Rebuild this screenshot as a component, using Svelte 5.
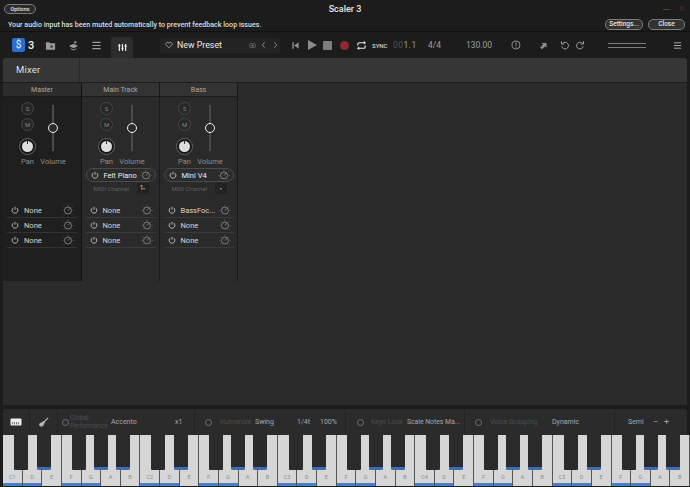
<script>
	const strips = [
		{ name: 'Master', master: true, inst: null, midi: '', fx: ['None', 'None', 'None'] },
		{ name: 'Main Track', inst: 'Felt Piano', midi: '1', fx: ['None', 'None', 'None'] },
		{ name: 'Bass', inst: 'Mini V4', midi: '', fx: ['BassFoc...', 'None', 'None'] }
	];

	const octaves = ['C1', 'C2', 'C3', 'C4', 'C5'];
	const whites = [
		{ n: 'D', on: true },
		{ n: 'E', on: false },
		{ n: 'F', on: true },
		{ n: 'G', on: true },
		{ n: 'A', on: false },
		{ n: 'B', on: false }
	];
	// black keys of one octave, k1..k5 hold their place
	const blacks = [
		{ cls: 'k1', on: false },
		{ cls: 'k2', on: true },
		{ cls: 'k3', on: false },
		{ cls: 'k4', on: true },
		{ cls: 'k5', on: true }
	];
</script>

{#snippet power()}
	<svg class="pw" viewBox="0 0 10 10" aria-hidden="true">
		<path d="M3 2.400 A3.600 3.600 0 1 0 7 2.400" fill="none" stroke="#d0d0d0" stroke-width="1" />
		<path d="M5 1 V4.600" stroke="#d0d0d0" stroke-width="1" />
	</svg>
{/snippet}

{#snippet dial()}
	<svg class="dial" viewBox="0 0 12 12" aria-hidden="true">
		<circle cx="6" cy="6.500" r="3.500" fill="none" stroke="#8f8f8f" stroke-width="0.8" />
		<path d="M6 6.500 L7.800 4.300" stroke="#8f8f8f" stroke-width="0.8" />
		<path d="M6 .6V1.800M1.600 2.400l.8.8M10.400 2.400l-.8.8M.3 6.500h1.100M10.700 6.500h1.100M1.800 10.600l.7-.7M10.200 10.600l-.7-.7" stroke="#6f6f6f" stroke-width="0.7" />
	</svg>
{/snippet}

<div class="app">
	<header class="titlebar">
		<button class="mac opt">Options</button>
		<span class="title">Scaler 3</span>
		<span class="winctl"><i class="min"></i><i class="x">×</i></span>
	</header>
	<div class="notice">
		<span>Your audio input has been muted automatically to prevent feedback loop issues.</span>
		<span class="notice-btns">
			<button class="mac settings">Settings...</button>
			<button class="mac close">Close</button>
		</span>
	</div>

	<nav class="toolbar">
		<span class="logo">$</span>
		<span class="logo3">3</span>
		<svg class="ic folder" viewBox="0 0 12 12"><path d="M1 2.500h3.500l1 1H11v7H1z" fill="#9a9a9a" /><rect x="6" y="6" width="2.400" height="2.400" fill="#333" /></svg>
		<svg class="ic layers" viewBox="0 0 12 12"><path d="M1 6.500 6 4l5 2.500L6 9z" fill="#9a9a9a" /><path d="M3 9.500 6 11l3-1.500" stroke="#9a9a9a" fill="none" /><path d="M8 1v3M6.500 2.500h3" stroke="#9a9a9a" /></svg>
		<svg class="ic list" viewBox="0 0 12 12"><path d="M1.500 2.500h9M1.500 6h9M1.500 9.500h9" stroke="#9a9a9a" stroke-width="1.300" /></svg>
		<span class="mixtab">
			<svg viewBox="0 0 10 10" width="9" height="9"><path d="M1.500 1v8M5 1v8M8.500 1v8" stroke="#eee" stroke-width="1.300" /><path d="M.3 3h2.400M3.800 6h2.400M7.300 3.500h2.400" stroke="#eee" stroke-width="1.300" /></svg>
		</span>
		<div class="preset">
			<svg class="heart" viewBox="0 0 10 10"><path d="M5 8.500 1.300 4.800a2 2 0 0 1 3.700-2 2 2 0 0 1 3.700 2z" fill="none" stroke="#bdbdbd" stroke-width=".9" /></svg>
			<span class="pname">New Preset</span>
			<svg class="pic" viewBox="0 0 10 10"><rect x="1" y="2.500" width="8" height="5.500" rx="1" fill="none" stroke="#777" /><rect x="3.500" y="4" width="3" height="2.500" fill="#777" /></svg>
			<svg class="chev" viewBox="0 0 6 10"><path d="M4.500 1.500 1.500 5l3 3.500" fill="none" stroke="#999" /></svg>
			<svg class="chev c2" viewBox="0 0 6 10"><path d="M1.500 1.500 4.500 5l-3 3.500" fill="none" stroke="#999" /></svg>
		</div>
		<svg class="tr prev" viewBox="0 0 10 10"><path d="M1.500 1.500h1.600v7H1.500zM8.500 1.500v7L3.500 5z" fill="#8f8f8f" /></svg>
		<svg class="tr play" viewBox="0 0 10 10"><path d="M1 0v10l9-5z" fill="#8a8a8a" /></svg>
		<span class="stop"></span>
		<span class="rec"></span>
		<svg class="tr loop" viewBox="0 0 12 12"><path d="M2 6V4.500a1.500 1.500 0 0 1 1.500-1.500H9M10 6v1.500A1.500 1.500 0 0 1 8.500 9H3" fill="none" stroke="#e6e6e6" stroke-width="1.300" /><path d="M8.500 1 11 3 8.500 5zM3.500 7 1 9l2.500 2z" fill="#e6e6e6" /></svg>
		<span class="sync">SYNC</span>
		<span class="pos"><b>00</b>1.1</span>
		<span class="sig">4/4</span>
		<span class="bpm">130.00</span>
		<svg class="tr info" viewBox="0 0 12 12"><circle cx="6" cy="6" r="4.800" fill="none" stroke="#a8a8a8" /><path d="M6 3v3.800M6 8v1.100" stroke="#a8a8a8" /></svg>
		<svg class="tr exp" viewBox="0 0 12 12"><path d="M3.500 2.500H10V9L8 7 4 11 1.500 8.500 5.500 4.500z" fill="#8f8f8f" /></svg>
		<svg class="tr undo" viewBox="0 0 12 12"><path d="M3 4.200A4 4 0 1 1 2.200 7.500" fill="none" stroke="#a8a8a8" stroke-width="1.100" /><path d="M1.800 1.500v3.300h3.300" fill="none" stroke="#a8a8a8" stroke-width="1.100" /></svg>
		<svg class="tr redo" viewBox="0 0 12 12"><path d="M9 4.200A4 4 0 1 0 9.800 7.500" fill="none" stroke="#a8a8a8" stroke-width="1.100" /><path d="M10.200 1.500v3.300H6.900" fill="none" stroke="#a8a8a8" stroke-width="1.100" /></svg>
		<span class="meter"><i></i><i></i></span>
		<svg class="tr burger" viewBox="0 0 10 10"><path d="M1 2h8M1 5h8M1 8h8" stroke="#a8a8a8" stroke-width="1.100" /></svg>
	</nav>

	<main class="panel">
		<div class="tabbar"><div class="tabname">Mixer</div></div>
		<div class="strips">
			{#each strips as s}
				<section class="strip" class:master={s.master}>
					<div class="sname">{s.name}</div>
					<div class="controls">
						<div class="col-left">
							<span class="round">S</span>
							<span class="round">M</span>
							<span class="knob"><i></i></span>
							<span class="lab">Pan</span>
						</div>
						<div class="col-right">
							<div class="fader"><span class="thumb"></span></div>
							<span class="lab">Volume</span>
						</div>
					</div>
					<div class="inst-area">
						{#if s.inst}
							<div class="inst">
								{@render power()}
								<span class="iname">{s.inst}</span>
								{@render dial()}
							</div>
							<div class="midi">
								<span>MIDI Channel</span>
								<span class="mbox">{s.midi}<em>▾</em></span>
							</div>
						{/if}
					</div>
					<div class="fxlist">
						{#each s.fx as f}
							<div class="fx">
								{@render power()}
								<span class="fname">{f}</span>
								{@render dial()}
							</div>
						{/each}
					</div>
				</section>
			{/each}
		</div>
	</main>

	<div class="bottom">
		<div class="sec s-keys">
			<svg viewBox="0 0 12 8" width="12" height="8"><rect x=".5" y=".5" width="11" height="7" rx="1" fill="#eee" /><path d="M2.500 4v2.500M4.500 4v2.500M6.500 4v2.500M8.500 4v2.500" stroke="#555" stroke-width=".8" /></svg>
		</div>
		<div class="sec s-gtr">
			<svg viewBox="0 0 12 12" width="11" height="11"><path d="M11 1 6.500 5.500" stroke="#b5b5b5" stroke-width="1.300" /><path d="M6 4.500c1 0 1.800.8 1.500 1.800-.3.700-.9.800-1 1.400-.2 1.500-1.400 3-3 2.800C2 10.300 1 9 1.300 7.700c.3-1.200 1.600-1.400 2.500-1.700.8-.3 1.100-1.500 2.200-1.500z" fill="#b5b5b5" /></svg>
		</div>
		<div class="sec s-global">
			<span class="ring"></span>
			<span class="dim two">Global<br />Performance</span>
			<span class="val accento">Accento</span>
			<span class="val x1">x1</span>
		</div>
		<div class="sec s-human">
			<span class="ring"></span>
			<span class="dim hum">Humanize</span>
			<span class="val swing">Swing</span>
			<span class="val t14">1/4t</span>
			<span class="val pct">100%</span>
		</div>
		<div class="sec s-lock">
			<span class="ring"></span>
			<span class="dim lock">Keys Lock</span>
			<span class="val scale">Scale Notes Ma...</span>
		</div>
		<div class="sec s-voice">
			<span class="ring"></span>
			<span class="dim voice">Voice Grouping</span>
			<span class="val dyn">Dynamic</span>
		</div>
		<div class="sec s-semi">
			<span class="val">Semi</span>
			<span class="pm minus">−</span>
			<span class="pm">+</span>
		</div>
	</div>

	<div class="keyboard">
		{#each octaves as c}
			<div class="octave">
				<div class="white on"><span>{c}</span></div>
				{#each whites as w}
					<div class="white" class:on={w.on}><span>{w.n}</span></div>
				{/each}
				{#each blacks as b}
					<div class="black {b.cls}" class:on={b.on}></div>
				{/each}
			</div>
		{/each}
	</div>
</div>

<style>
	:global(body) {
		margin: 0;
		background: #1c1c1c;
	}

	.app {
		width: 690px;
		height: 487px;
		overflow: hidden;
		display: flex;
		flex-direction: column;
		background: #1c1c1c;
		font-family: Roboto, "Liberation Sans", sans-serif;
		color: #d8d8d8;
	}

	.titlebar {
		height: 18px;
		flex: none;
		position: relative;
		display: flex;
		align-items: center;
		padding-left: 4px;
		box-sizing: border-box;
	}

	.title {
		position: absolute;
		left: 0;
		right: 0;
		text-align: center;
		font-size: 9px;
		font-weight: 500;
		color: #e6e6e6;
	}

	.mac {
		font-family: inherit;
		font-size: 6.500px;
		color: #e4e4e4;
		background: #333;
		border: 1px solid #7c7c7c;
		border-radius: 5px;
		padding: 0;
		height: 11px;
		line-height: 9px;
		font-weight: 500;
	}

	.opt {
		width: 32px;
		height: 10px;
		font-size: 5.500px;
		background: #2b2b2b;
	}

	.winctl {
		position: absolute;
		right: 6px;
		top: 4px;
		display: flex;
		gap: 9px;
		align-items: center;
	}

	.min {
		width: 7px;
		height: 1px;
		background: #4f4a22;
	}

	.x {
		font-style: normal;
		font-size: 10px;
		line-height: 10px;
		color: #5c2622;
	}

	.notice {
		height: 14px;
		flex: none;
		display: flex;
		justify-content: space-between;
		align-items: center;
		padding: 0 5px 0 8px;
		font-size: 7.100px;
		font-weight: 500;
		color: #dcdcdc;
		border-bottom: 1px solid #111;
		box-sizing: border-box;
	}

	.notice-btns {
		display: flex;
		gap: 5px;
	}

	.settings {
		width: 38px;
	}

	.close {
		width: 37px;
	}

	.toolbar {
		height: 26px;
		flex: none;
		display: flex;
		align-items: center;
	}

	.logo {
		width: 13px;
		height: 14px;
		margin-left: 12px;
		background: #2a6fd0;
		border-radius: 2px;
		color: #e8f0ff;
		font-size: 10px;
		line-height: 14px;
		text-align: center;
	}

	.logo3 {
		margin-left: 3px;
		font-size: 11px;
		font-weight: 500;
		color: #f0f0f0;
		width: 10px;
	}

	.ic {
		width: 11px;
		height: 11px;
		flex: none;
	}

	.folder {
		margin-left: 7px;
	}

	.layers {
		margin-left: 12px;
	}

	.list {
		margin-left: 12px;
	}

	.mixtab {
		margin-left: 9px;
		width: 22px;
		height: 21px;
		align-self: flex-end;
		background: #2d2d2d;
		border-radius: 3px 3px 0 0;
		display: flex;
		align-items: center;
		justify-content: center;
	}

	.preset {
		margin-left: 27px;
		width: 120px;
		height: 15px;
		background: #232323;
		border-radius: 2px;
		display: flex;
		align-items: center;
		box-sizing: border-box;
		padding-left: 5px;
	}

	.heart {
		width: 8px;
		height: 8px;
	}

	.pname {
		margin-left: 4px;
		width: 72px;
		font-size: 8.800px;
		color: #e8e8e8;
	}

	.pic {
		width: 7px;
		height: 7px;
	}

	.chev {
		margin-left: 5px;
		width: 5px;
		height: 8px;
	}

	.chev.c2 {
		margin-left: 7px;
	}

	.tr {
		flex: none;
	}

	.prev {
		margin-left: 11px;
		width: 9px;
		height: 9px;
	}

	.play {
		margin-left: 7px;
		width: 10px;
		height: 10px;
	}

	.stop {
		margin-left: 6px;
		width: 9px;
		height: 9px;
		background: #7d7d7d;
		border-radius: 1px;
	}

	.rec {
		margin-left: 8px;
		width: 9px;
		height: 9px;
		border-radius: 50%;
		background: #8d2a32;
	}

	.loop {
		margin-left: 7px;
		width: 11px;
		height: 11px;
	}

	.sync {
		margin-left: 5px;
		width: 21px;
		font-size: 6px;
		font-weight: 500;
		color: #d5d5d5;
	}

	.pos {
		font-size: 8.500px;
		color: #9c9c9c;
		width: 35px;
		letter-spacing: 0.5px;
	}

	.pos b {
		font-weight: 400;
		color: #555;
	}

	.sig {
		font-size: 8.500px;
		color: #9c9c9c;
		width: 38px;
	}

	.bpm {
		font-size: 8.500px;
		color: #9c9c9c;
		width: 45px;
	}

	.info {
		width: 10px;
		height: 10px;
	}

	.exp {
		margin-left: 18px;
		width: 9px;
		height: 9px;
	}

	.undo {
		margin-left: 12px;
		width: 10px;
		height: 10px;
	}

	.redo {
		margin-left: 5px;
		width: 10px;
		height: 10px;
	}

	.meter {
		margin-left: 23px;
		width: 38px;
		height: 5px;
		display: flex;
		flex-direction: column;
		justify-content: space-between;
	}

	.meter i {
		height: 1px;
		background: #7c7c7c;
	}

	.burger {
		margin-left: 27px;
		width: 9px;
		height: 9px;
	}

	.panel {
		flex: 1;
		margin: 0 3px;
		background: #2b2b2b;
		border-radius: 3px 3px 0 0;
		display: flex;
		flex-direction: column;
		min-height: 0;
	}

	.tabbar {
		height: 25px;
		background: #363636;
		border-bottom: 1px solid #1d1d1d;
		border-radius: 3px 3px 0 0;
		box-sizing: border-box;
		flex: none;
	}

	.tabname {
		width: 77px;
		height: 24px;
		border-right: 1px solid #292929;
		font-size: 9.500px;
		line-height: 24px;
		padding-left: 13px;
		box-sizing: border-box;
		color: #dfdfdf;
		letter-spacing: 0.2px;
	}

	.strips {
		display: flex;
		height: 198px;
		align-items: stretch;
	}

	.strip {
		width: 78px;
		flex: none;
		background: #2a2a2a;
		border-right: 1px solid #191919;
		box-sizing: border-box;
		display: flex;
		flex-direction: column;
		align-items: center;
	}

	.strip.master {
		width: 79px;
		background: #1f1f1f;
		border-right: 1px solid #111;
	}

	.sname {
		width: 100%;
		height: 14px;
		background: #333;
		border-bottom: 1px solid #1a1a1a;
		box-sizing: border-box;
		font-size: 7px;
		line-height: 15px;
		text-align: center;
		color: #a9a9a9;
		flex: none;
	}

	.master .sname {
		background: #2c2c2c;
	}

	.controls {
		width: 100%;
		display: flex;
		padding: 5px 0 0 15px;
		box-sizing: border-box;
		height: 71px;
		flex: none;
	}

	.col-left {
		width: 19px;
		display: flex;
		flex-direction: column;
		align-items: center;
	}

	.col-right {
		margin-left: 3px;
		width: 26px;
		display: flex;
		flex-direction: column;
		align-items: center;
	}

	.round {
		width: 11px;
		height: 11px;
		border: 1px solid #474747;
		background: #262626;
		border-radius: 50%;
		font-size: 6px;
		line-height: 11px;
		text-align: center;
		color: #848484;
		margin-bottom: 2.500px;
		flex: none;
	}

	.knob {
		margin-top: 5px;
		width: 17px;
		height: 17px;
		box-sizing: border-box;
		border-radius: 50%;
		border: 1.500px solid #666;
		background: #161616;
		display: flex;
		align-items: center;
		justify-content: center;
		flex: none;
		position: relative;
	}

	.knob i {
		width: 11px;
		height: 11px;
		border-radius: 50%;
		background: #dddddd;
		position: relative;
	}

	/* pointer notch at twelve o'clock */
	.knob i::after {
		content: '';
		position: absolute;
		left: 5px;
		top: -1px;
		width: 1px;
		height: 4px;
		background: #333;
	}

	.lab {
		font-size: 7.500px;
		color: #8e8e8e;
		line-height: 9px;
		white-space: nowrap;
	}

	.col-left .lab {
		margin-top: 2px;
	}

	.fader {
		width: 2px;
		height: 46px;
		margin-top: 3px;
		background: #4b4b4b;
		position: relative;
		flex: none;
	}

	.thumb {
		position: absolute;
		left: -4px;
		top: 18px;
		width: 10px;
		height: 10px;
		border: 1.200px solid #f2f2f2;
		border-radius: 50%;
		background: #2a2a2a;
		box-sizing: border-box;
	}

	.col-right .lab {
		margin-top: 6px;
	}

	.inst-area {
		height: 35px;
		width: 100%;
		flex: none;
		display: flex;
		flex-direction: column;
		align-items: center;
	}

	.inst {
		width: 70px;
		height: 14px;
		box-sizing: border-box;
		border: 1px solid #4a4a4a;
		border-radius: 7px;
		display: flex;
		align-items: center;
		padding: 0 3px 0 4px;
		background: #2c2c2c;
		flex: none;
	}

	.iname {
		flex: 1;
		margin-left: 5px;
		font-size: 7.500px;
		color: #ececec;
	}

	.midi {
		width: 70px;
		height: 13px;
		display: flex;
		align-items: center;
		justify-content: space-between;
		font-size: 6px;
		color: #5f5f5f;
		padding: 0 7px 0 8px;
		box-sizing: border-box;
		flex: none;
	}

	.mbox {
		width: 12px;
		height: 11px;
		background: #222;
		color: #ddd;
		font-size: 6.500px;
		line-height: 11px;
		text-align: center;
		flex: none;
	}

	.mbox em {
		font-style: normal;
		font-size: 4px;
		color: #999;
	}

	.fxlist {
		width: 70px;
	}

	.fx {
		height: 15px;
		border-bottom: 1px solid #3a3a3a;
		box-sizing: border-box;
		display: flex;
		align-items: center;
		padding: 0 3px 0 4px;
	}

	.master .fx {
		border-bottom-color: #333;
	}

	.fname {
		flex: 1;
		margin-left: 5px;
		font-size: 7.500px;
		color: #d6d6d6;
		white-space: nowrap;
	}

	.pw {
		width: 8px;
		height: 8px;
		flex: none;
	}

	.dial {
		width: 12px;
		height: 12px;
		flex: none;
	}

	.bottom {
		flex: none;
		height: 26px;
		margin: 4px 3px 0;
		background: #2b2b2b;
		border-radius: 3px 3px 0 0;
		display: flex;
		font-size: 7px;
	}

	.sec {
		height: 100%;
		border-right: 1px solid #232323;
		box-sizing: border-box;
		display: flex;
		align-items: center;
		flex: none;
	}

	.s-keys {
		width: 27px;
		justify-content: center;
	}

	.s-gtr {
		width: 28px;
		justify-content: center;
	}

	.s-global {
		width: 137px;
		padding-left: 4px;
	}

	.s-human {
		width: 151px;
		padding-left: 10px;
	}

	.s-lock {
		width: 119px;
		padding-left: 11px;
	}

	.s-voice {
		width: 150px;
		padding-left: 10px;
	}

	.s-semi {
		flex: 1;
		padding-left: 13px;
		border-right: 0;
	}

	.ring {
		width: 7px;
		height: 7px;
		box-sizing: border-box;
		border: 1px solid #707070;
		border-radius: 50%;
		flex: none;
	}

	.dim {
		color: #4e4e4e;
		font-size: 7px;
		white-space: nowrap;
	}

	.two {
		margin-left: 1px;
		width: 41px;
		font-size: 6.500px;
		line-height: 8.500px;
	}

	.val {
		color: #a8a8a8;
		font-size: 7px;
		white-space: nowrap;
	}

	.accento {
		width: 64px;
	}

	.hum {
		margin-left: 8px;
		width: 35px;
	}

	.swing {
		width: 42px;
	}

	.t14 {
		width: 23px;
	}

	.lock {
		margin-left: 7px;
		width: 36px;
	}

	.scale {
		font-size: 6.800px;
	}

	.voice {
		margin-left: 8px;
		width: 62px;
	}

	.pm {
		color: #a0a0a0;
		font-size: 9px;
		margin-left: 6px;
	}

	.pm.minus {
		margin-left: 9px;
	}

	.keyboard {
		flex: none;
		height: 51px;
		margin: 0 0 1px 3px;
		display: flex;
		width: 687px;
	}

	.octave {
		position: relative;
		flex: 1;
		display: flex;
	}

	.white {
		flex: 1;
		background: #d6d6d6;
		border-right: 1px solid #555;
		box-sizing: border-box;
		display: flex;
		align-items: flex-end;
		justify-content: center;
		font-size: 5.500px;
		color: #8c8c8c;
		padding-bottom: 6px;
		position: relative;
	}

	.white.on::after {
		content: '';
		position: absolute;
		left: 0;
		right: 0;
		bottom: 0;
		height: 3px;
		background: #4c7fc9;
	}

	.black {
		position: absolute;
		top: 0;
		width: 14px;
		height: 35px;
		background: #2b2b2b;
		border-radius: 0 0 1px 1px;
		box-sizing: border-box;
	}

	.black.on {
		border-bottom: 3px solid #3f6db0;
	}

	.k1 {
		left: 11px;
	}

	.k2 {
		left: 34px;
	}

	.k3 {
		left: 69px;
	}

	.k4 {
		left: 91px;
	}

	.k5 {
		left: 113px;
	}
</style>
